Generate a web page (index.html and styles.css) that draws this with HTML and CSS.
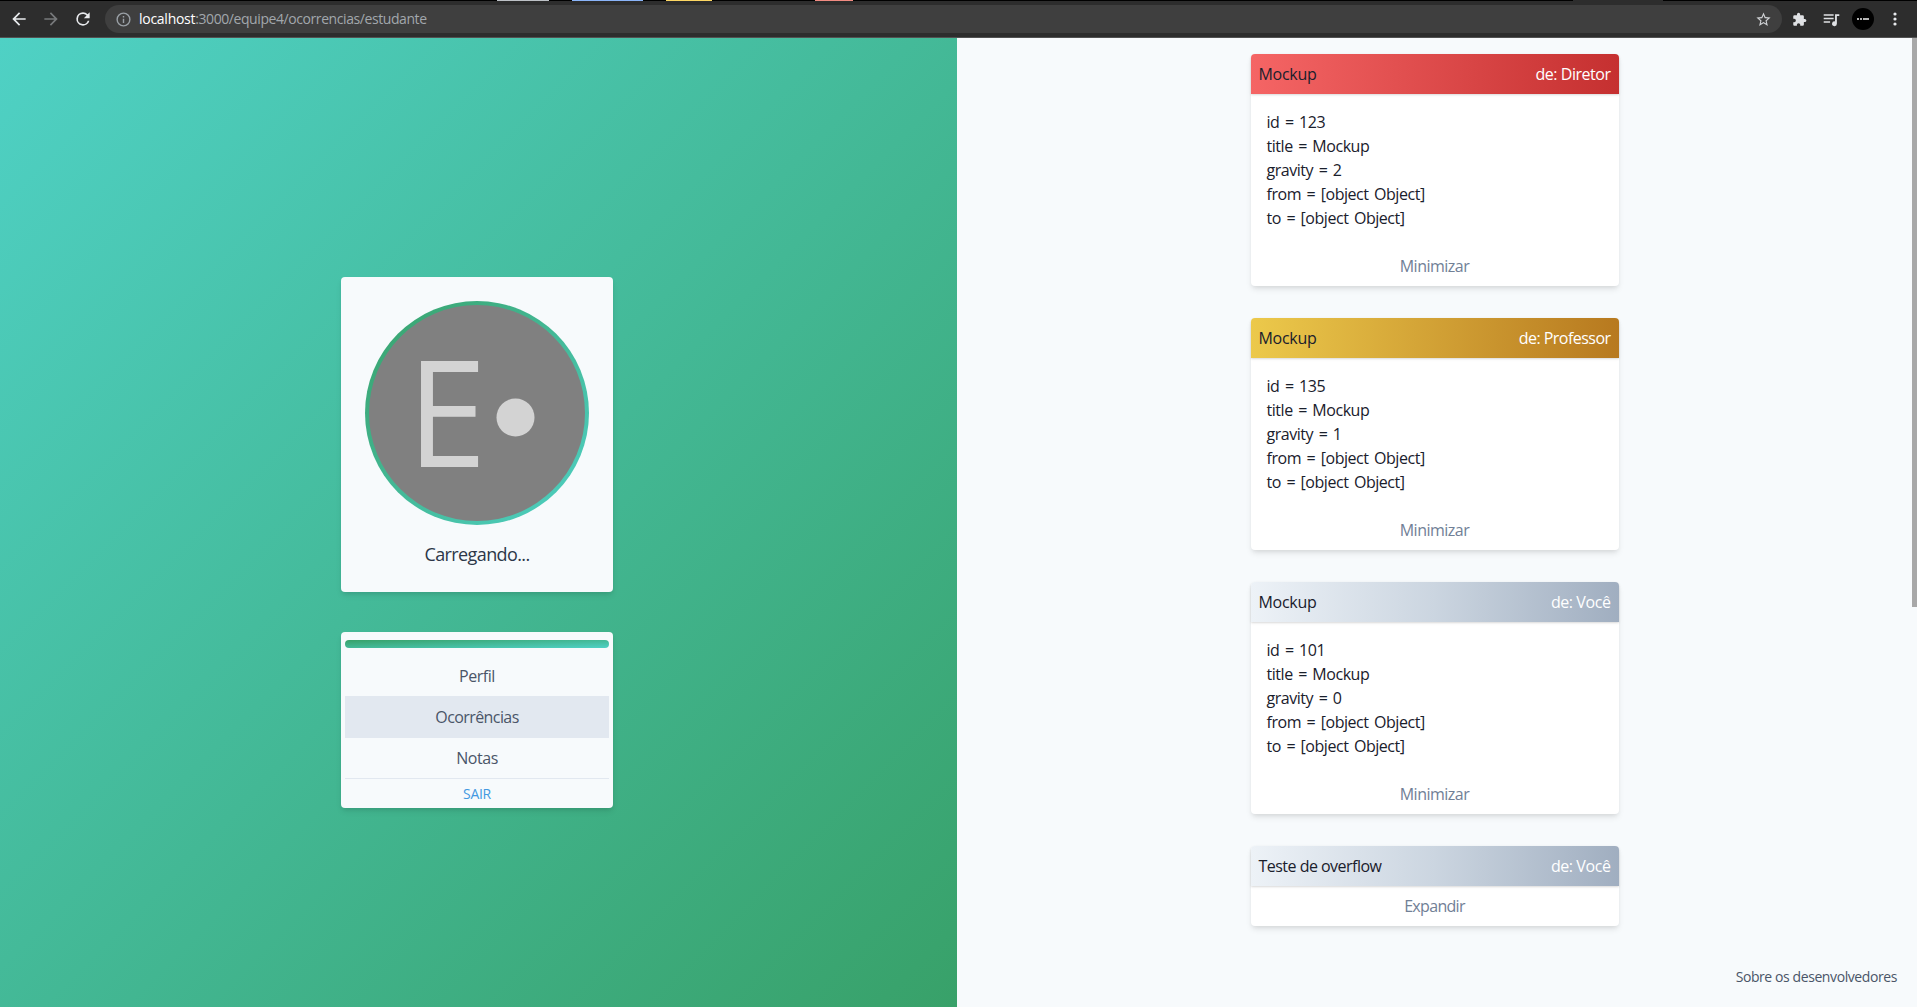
FILE: index.html
```html
<!DOCTYPE html>
<html lang="pt-BR">
<head>
<meta charset="utf-8">
<title>Ocorrências</title>
<link rel="stylesheet" href="styles.css">
</head>
<body>
<div class="tabstrip">
  <i class="tab-group gray"></i><i class="tab-group blue"></i><i class="tab-group yellow"></i><i class="tab-group red"></i><i class="tab-active"></i>
</div>
<header class="toolbar">
  <svg class="nav back" viewBox="0 0 24 24"><path d="M20 11H7.83l5.59-5.59L12 4l-8 8 8 8 1.41-1.41L7.83 13H20z"/></svg>
  <svg class="nav forward" viewBox="0 0 24 24"><path d="M12 4l-1.41 1.41L16.17 11H4v2h12.17l-5.58 5.59L12 20l8-8z"/></svg>
  <svg class="nav reload" viewBox="0 0 24 24"><path d="M17.65 6.35A7.96 7.96 0 0 0 12 4a8 8 0 1 0 7.73 10h-2.08A6 6 0 1 1 12 6c1.66 0 3.14.69 4.22 1.78L13 11h7V4z"/></svg>
  <div class="omnibox">
    <svg class="info" viewBox="0 0 24 24"><path d="M11 17h2v-6h-2zm1-15a10 10 0 1 0 0 20 10 10 0 0 0 0-20zm0 18a8 8 0 1 1 0-16 8 8 0 0 1 0 16zM11 9h2V7h-2z"/></svg>
    <span class="url"><b>localhost</b>:3000/equipe4/ocorrencias/estudante</span>
    <svg class="star" viewBox="0 0 24 24"><path d="M22 9.24l-7.19-.62L12 2 9.19 8.63 2 9.24l5.46 4.73L5.82 21 12 17.27 18.18 21l-1.63-7.03zM12 15.4l-3.76 2.27 1-4.28-3.32-2.88 4.38-.38L12 6.1l1.71 4.04 4.38.38-3.32 2.88 1 4.28z"/></svg>
  </div>
  <svg class="ext" viewBox="0 0 24 24"><path d="M20.5 11H19V7a2 2 0 0 0-2-2h-4V3.5a2.5 2.5 0 0 0-5 0V5H4a2 2 0 0 0-2 2v3.8h1.5a2.7 2.7 0 0 1 0 5.4H2V20c0 1.1.9 2 2 2h3.8v-1.5a2.7 2.7 0 0 1 5.4 0V22H17a2 2 0 0 0 2-2v-4h1.5a2.5 2.5 0 0 0 0-5z"/></svg>
  <svg class="media" viewBox="0 0 24 24"><path d="M1 4.5h14v2.200H1zM1 9.500h14v2.200H1zM1 14.500h9v2.200H1zM17 4.500h6v2.400h-3.400v11.100a3.400 3.400 0 1 1-2.600-3.300z"/></svg>
  <span class="profile"><i></i><i></i><i class="wide"></i></span>
  <svg class="kebab" viewBox="0 0 24 24"><circle cx="12" cy="4.500" r="2.400"/><circle cx="12" cy="12" r="2.400"/><circle cx="12" cy="19.500" r="2.400"/></svg>
</header>
<main class="page">
  <aside class="side">
    <section class="profile-card">
      <div class="avatar">
        <svg viewBox="0 0 216 216"><circle cx="108" cy="108" r="108" fill="#808080"/><text x="39.200" y="162" transform="scale(.97 1)" class="initial">E</text><circle cx="146.500" cy="112.500" r="19" fill="#d3d3d3"/></svg>
      </div>
      <p class="name">Carregando...</p>
    </section>
    <nav class="menu">
      <div class="accent"></div>
      <a class="item">Perfil</a>
      <a class="item active">Ocorrências</a>
      <a class="item">Notas</a>
      <a class="exit">SAIR</a>
    </nav>
  </aside>
  <section class="feed">
    <article class="card">
      <header class="head severe"><span class="title">Mockup</span><span class="from director">de: Diretor</span></header>
      <div class="body"><p>id = 123</p><p>title = Mockup</p><p>gravity = 2</p><p>from = [object Object]</p><p>to = [object Object]</p></div>
      <div class="toggle">Minimizar</div>
    </article>
    <article class="card">
      <header class="head medium"><span class="title">Mockup</span><span class="from">de: Professor</span></header>
      <div class="body"><p>id = 135</p><p>title = Mockup</p><p>gravity = 1</p><p>from = [object Object]</p><p>to = [object Object]</p></div>
      <div class="toggle">Minimizar</div>
    </article>
    <article class="card">
      <header class="head light"><span class="title">Mockup</span><span class="from self">de: Você</span></header>
      <div class="body"><p>id = 101</p><p>title = Mockup</p><p>gravity = 0</p><p>from = [object Object]</p><p>to = [object Object]</p></div>
      <div class="toggle">Minimizar</div>
    </article>
    <article class="card">
      <header class="head light"><span class="title long">Teste de overflow</span><span class="from self">de: Você</span></header>
      <div class="toggle expand">Expandir</div>
    </article>
    <a class="about">Sobre os desenvolvedores</a>
  </section>
  <div class="scrollbar"><div class="thumb"></div></div>
</main>
</body>
</html>
```
FILE: styles.css
```css
* { box-sizing: border-box; }
body {
  margin: 0;
  height: 1007px;
  overflow: hidden;
  display: flex;
  flex-direction: column;
  font: 16px/24px "Open Sans", sans-serif;
  color: #1a202c;
  background: #f7fafc;
}
p { margin: 0; }
svg { display: block; flex: none; }

.tabstrip { display: flex; height: 1px; background: #000; flex: none; }
.tab-group { height: 1px; }
.gray { width: 52px; margin-left: 497px; background: #bdc1c6; }
.blue { width: 71px; margin-left: 23px; background: #8ab4f8; }
.yellow { width: 46px; margin-left: 23px; background: #fdd663; }
.red { width: 38px; margin-left: 103px; background: #f28b82; }
.tab-active { width: 90px; margin-left: 720px; background: #2d2d2d; }

.toolbar {
  display: flex;
  align-items: center;
  height: 37px;
  flex: none;
  background: #2d2d2d;
  border-bottom: 1px solid #525252;
  padding-left: 9px;
}
.nav { width: 20px; height: 20px; fill: #e8eaed; }
.forward { margin-left: 12px; fill: #77797b; }
.reload { margin-left: 12px; }
.omnibox {
  display: flex;
  align-items: center;
  width: 1677px;
  height: 28px;
  margin-left: 12px;
  padding: 0 10px;
  border-radius: 14px;
  background: #3f3f3f;
}
.info { width: 17px; height: 17px; fill: #9aa0a6; }
.url { margin-left: 7px; font-size: 14px; letter-spacing: -.42px; color: #a2a7ac; }
.url b { font-weight: 400; letter-spacing: -.27px; color: #fff; }
.star { width: 17px; height: 17px; margin-left: auto; fill: #cfd1d4; }
.ext { width: 15px; height: 15px; margin-left: 10px; fill: #dfe1e4; }
.media { width: 17px; height: 17px; margin-left: 16px; fill: #dfe1e4; }
.profile {
  display: flex;
  align-items: center;
  justify-content: center;
  gap: 1px;
  width: 22px;
  height: 22px;
  margin-left: 12px;
  border-radius: 50%;
  background: #000;
}
.profile i { width: 2px; height: 2px; background: #b5b5b5; }
.profile .wide { width: 6px; }
.kebab { width: 16px; height: 16px; margin-left: 13px; fill: #e8eaed; }

.page { display: flex; flex: 1; min-height: 0; }
.side {
  width: 957px;
  padding: 40px 3px 0 0;
  display: flex;
  flex-direction: column;
  align-items: center;
  justify-content: center;
  gap: 40px;
  background: linear-gradient(to bottom right, #4fd1c5, #38a169);
}
.profile-card, .menu {
  width: 272px;
  border-radius: 4px;
  background: #f7fafc;
  box-shadow: 0 4px 6px -1px rgba(0, 0, 0, .1), 0 2px 4px -1px rgba(0, 0, 0, .06);
}
.profile-card { height: 315px; padding: 24px; }
.avatar {
  width: 224px;
  height: 224px;
  padding: 4px;
  border-radius: 50%;
  background: linear-gradient(to bottom right, #38a169, #4fd1c5);
}
.initial { font-size: 148px; fill: #d3d3d3; }
.name { margin-top: 16px; font-size: 18px; line-height: 27px; letter-spacing: -.6px; text-align: center; color: #2d3748; }
.menu { height: 176px; padding: 8px 4px 0; }
.accent { height: 8px; margin-bottom: 8px; border-radius: 4px; background: linear-gradient(to bottom right, #38a169, #4fd1c5); }
.item, .exit { display: block; text-align: center; }
.item { line-height: 40px; letter-spacing: -.45px; color: #4a5568; }
.item.active { line-height: 42px; letter-spacing: -.58px; background: #e2e8f0; }
.exit { border-top: 1px solid #e2e8f0; font-size: 14px; line-height: 29px; letter-spacing: -.3px; color: #4299e1; }

.feed {
  position: relative;
  flex: 1;
  padding-top: 16px;
  display: flex;
  flex-direction: column;
  align-items: center;
  gap: 32px;
}
.card {
  width: 368px;
  border-radius: 4px;
  background: #fff;
  box-shadow: 0 4px 6px -1px rgba(0, 0, 0, .1), 0 2px 4px -1px rgba(0, 0, 0, .06);
}
.head {
  display: flex;
  justify-content: space-between;
  padding: 8px;
  border-radius: 4px 4px 0 0;
  box-shadow: 0 1px 3px rgba(0, 0, 0, .1), 0 1px 2px rgba(0, 0, 0, .06);
}
.severe { background: linear-gradient(to right, #f56565, #c53030); }
.medium { background: linear-gradient(to right, #ecc94b, #b7791f); }
.light { background: linear-gradient(to right, #edf2f7, #cbd5e0, #a0aec0); }
.title { letter-spacing: -.3px; }
.title.long { letter-spacing: -.52px; }
.from { letter-spacing: -.54px; color: #fff; }
.from.director { letter-spacing: -.47px; }
.from.self { letter-spacing: -.42px; }
.body { padding: 16px; letter-spacing: -.46px; word-spacing: 1.8px; }
.toggle { padding: 8px; text-align: center; letter-spacing: -.5px; color: #718096; }
.toggle.expand { letter-spacing: -.68px; }
.about {
  position: absolute;
  right: 15px;
  bottom: 18px;
  font-size: 14px;
  letter-spacing: -.41px;
  color: #4a5568;
}
.scrollbar { width: 5px; }
.thumb { height: 569px; background: #a8a8a8; }
```
